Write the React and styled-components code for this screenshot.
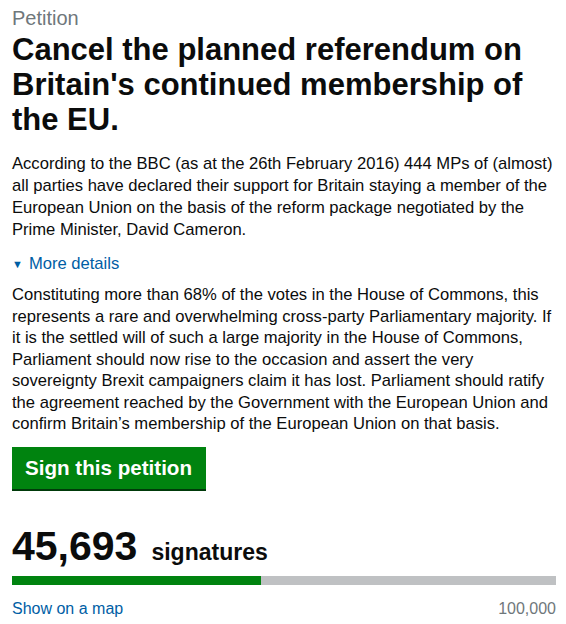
import React from "react";
import styled, { createGlobalStyle } from "styled-components";

const GlobalStyle = createGlobalStyle`
  body {
    margin: 0;
    background: #fff;
    font-family: "Liberation Sans", Arial, sans-serif;
    color: #0b0c0c;
  }
`;

const Page = styled.main`
  padding: 6px 10px 0 12px;
`;

const Caption = styled.div`
  font-size: 20px;
  line-height: 24px;
  color: #6f777b;
`;

const Title = styled.h1`
  margin: 2px 0 0;
  font-size: 31px;
  line-height: 35px;
  font-weight: 700;
`;

const Text = styled.p`
  margin: ${(props) => props.$top || 0}px 0 0;
  font-size: 16.6px;
  line-height: ${(props) => props.$lh || 22}px;
`;

const Details = styled.div`
  margin-top: 12px;
  font-size: 16.6px;
  line-height: 22px;
  color: #005ea5;
  display: flex;
  align-items: center;
  gap: 6px;
`;

const Arrow = styled.span`
  font-size: 11px;
`;

const Button = styled.button`
  margin-top: 12px;
  height: 42px;
  padding: 0 14px 0 13px;
  border: 0;
  background: #00830f;
  box-shadow: 0 2px 0 #003a0a;
  color: #fff;
  font-family: inherit;
  font-size: 20.6px;
  font-weight: 700;
  cursor: pointer;
`;

const Count = styled.div`
  margin-top: 36px;
  display: flex;
  align-items: baseline;
  gap: 14px;
`;

const Number = styled.span`
  font-size: 41px;
  line-height: 42px;
  font-weight: 700;
`;

const Label = styled.span`
  font-size: 23px;
  font-weight: 700;
`;

const Track = styled.div`
  margin-top: 9px;
  height: 9px;
  background: #bfc1c3;
`;

const Fill = styled.div`
  height: 100%;
  background: #00830f;
`;

const Footer = styled.div`
  margin-top: 13px;
  display: flex;
  justify-content: space-between;
  font-size: 16px;
  line-height: 22px;
`;

const MapLink = styled.a`
  color: #005ea5;
  text-decoration: none;
`;

const Target = styled.span`
  color: #6f777b;
`;

export default function App() {
  let count = 45693;
  let target = 100000;
  return (
    <Page>
      <GlobalStyle />
      <Caption>Petition</Caption>
      <Title>
        Cancel the planned referendum on Britain's continued membership of
        the EU.
      </Title>
      <Text $top={16}>
        According to the BBC (as at the 26th February 2016) 444 MPs of
        (almost) all parties have declared their support for Britain staying a
        member of the European Union on the basis of the reform package
        negotiated by the Prime Minister, David Cameron.
      </Text>
      <Details>
        <Arrow>▼</Arrow>More details
      </Details>
      <Text $top={9} $lh={21.5}>
        Constituting more than 68% of the votes in the House of Commons, this
        represents a rare and overwhelming cross-party Parliamentary majority.
        If it is the settled will of such a large majority in the House of
        Commons, Parliament should now rise to the occasion and assert the very
        sovereignty Brexit campaigners claim it has lost. Parliament should
        ratify the agreement reached by the Government with the European Union
        and confirm Britain’s membership of the European Union on that basis.
      </Text>
      <Button>Sign this petition</Button>
      <Count>
        <Number>{count.toLocaleString("en-GB")}</Number>
        <Label>signatures</Label>
      </Count>
      <Track>
        <Fill style={{ width: (count / target) * 100 + "%" }} />
      </Track>
      <Footer>
        <MapLink href="#">Show on a map</MapLink>
        <Target>{target.toLocaleString("en-GB")}</Target>
      </Footer>
    </Page>
  );
}
